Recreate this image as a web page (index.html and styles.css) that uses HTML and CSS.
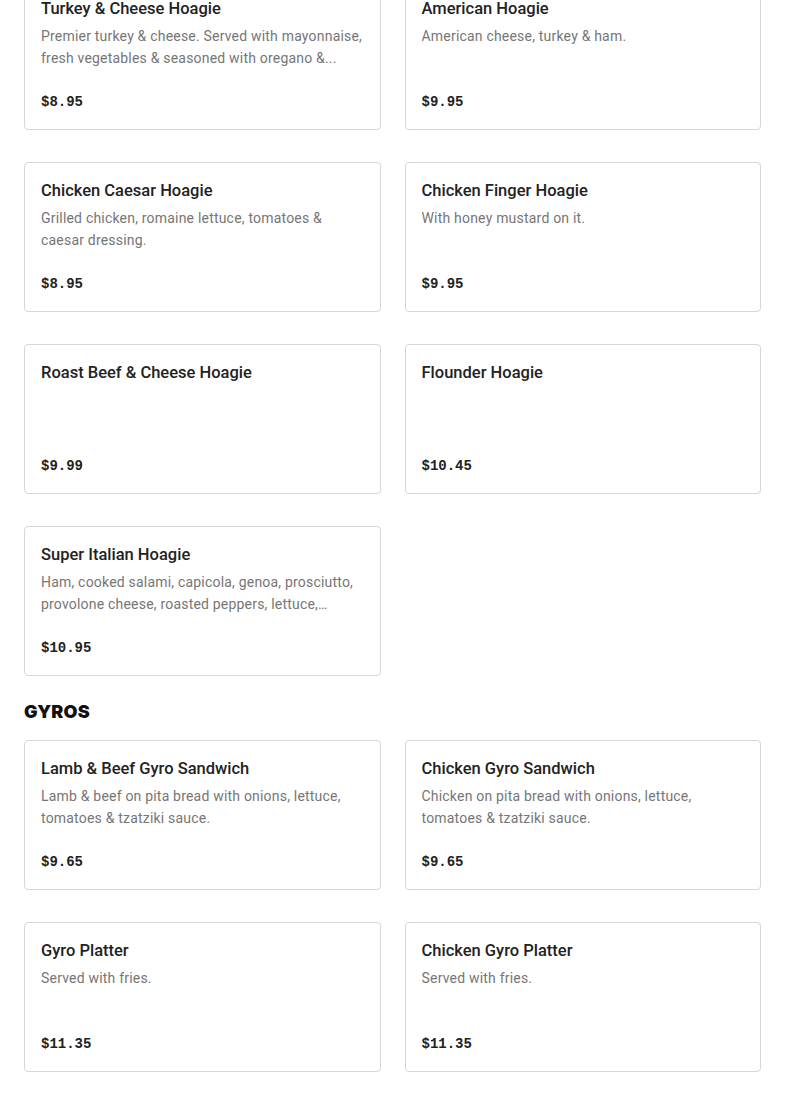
FILE: index.html
```
<!DOCTYPE html>
<html lang="en">
<head>
    <meta charset="UTF-8">
    <meta name="viewport" content="width=device-width, initial-scale=1.0">
    <link rel="stylesheet" href="styles.css">
    <title>Menu</title>
</head>
<body>

    <div class="menu">
        <section class="menu-section">
            <div class="item-grid scrolled">
                <div class="item-card">
                    <h3 class="item-name">Turkey &amp; Cheese Hoagie</h3>
                    <p class="item-desc">Premier turkey &amp; cheese. Served with mayonnaise, fresh vegetables &amp; seasoned with oregano &amp;...</p>
                    <div class="item-price">$8.95</div>
                </div>
                <div class="item-card">
                    <h3 class="item-name">American Hoagie</h3>
                    <p class="item-desc">American cheese, turkey &amp; ham.</p>
                    <div class="item-price">$9.95</div>
                </div>
                <div class="item-card">
                    <h3 class="item-name">Chicken Caesar Hoagie</h3>
                    <p class="item-desc">Grilled chicken, romaine lettuce, tomatoes &amp; caesar dressing.</p>
                    <div class="item-price">$8.95</div>
                </div>
                <div class="item-card">
                    <h3 class="item-name">Chicken Finger Hoagie</h3>
                    <p class="item-desc">With honey mustard on it.</p>
                    <div class="item-price">$9.95</div>
                </div>
                <div class="item-card">
                    <h3 class="item-name">Roast Beef &amp; Cheese Hoagie</h3>
                    <div class="item-price">$9.99</div>
                </div>
                <div class="item-card">
                    <h3 class="item-name">Flounder Hoagie</h3>
                    <div class="item-price">$10.45</div>
                </div>
                <div class="item-card">
                    <h3 class="item-name">Super Italian Hoagie</h3>
                    <p class="item-desc">Ham, cooked salami, capicola, genoa, prosciutto, provolone cheese, roasted peppers, lettuce, tomatoes, onions, oil &amp; oregano.</p>
                    <div class="item-price">$10.95</div>
                </div>
            </div>
        </section>

        <section class="menu-section">
            <h2 class="section-title">GYROS</h2>
            <div class="item-grid">
                <div class="item-card">
                    <h3 class="item-name">Lamb &amp; Beef Gyro Sandwich</h3>
                    <p class="item-desc">Lamb &amp; beef on pita bread with onions, lettuce, tomatoes &amp; tzatziki sauce.</p>
                    <div class="item-price">$9.65</div>
                </div>
                <div class="item-card">
                    <h3 class="item-name">Chicken Gyro Sandwich</h3>
                    <p class="item-desc">Chicken on pita bread with onions, lettuce, tomatoes &amp; tzatziki sauce.</p>
                    <div class="item-price">$9.65</div>
                </div>
                <div class="item-card">
                    <h3 class="item-name">Gyro Platter</h3>
                    <p class="item-desc">Served with fries.</p>
                    <div class="item-price">$11.35</div>
                </div>
                <div class="item-card">
                    <h3 class="item-name">Chicken Gyro Platter</h3>
                    <p class="item-desc">Served with fries.</p>
                    <div class="item-price">$11.35</div>
                </div>
            </div>
        </section>

        <section class="menu-section">
            <h2 class="section-title">SANDWICHES</h2>
        </section>
    </div>

</body>
</html>
```

FILE: styles.css
```
body {
    margin: 0;
    background-color: #fff;
    color: #222;
    font-family: 'Roboto', 'Liberation Sans', sans-serif;
}

.menu {
    padding: 0 24px;
}

/* la page est deja defilee : la premiere rangee est coupee en haut */
.scrolled {
    margin-top: -20px;
}

.section-title {
    margin: 24px 0 16px;
    font-family: 'Inter', sans-serif;
    font-size: 18px;
    line-height: 24px;
    font-weight: 900;
    letter-spacing: 0.2px;
    color: #111;
}

.menu-section:last-child .section-title {
    margin-top: 28px;
}

.item-grid {
    display: grid;
    grid-template-columns: 1fr 1fr;
    column-gap: 24px;
    row-gap: 32px;
}

.item-card {
    display: flex;
    flex-direction: column;
    height: 150px;
    box-sizing: border-box;
    padding: 16px;
    border: 1px solid #d6d6d6;
    border-radius: 4px;
}

.item-name {
    margin: 0;
    font-size: 16.5px;
    line-height: 24px;
    font-weight: 500;
    color: #222;
}

.item-desc {
    margin: 4px 0 0;
    font-size: 14px;
    line-height: 22px;
    letter-spacing: 0.2px;
    color: #767676;
    display: -webkit-box;
    -webkit-line-clamp: 2;
    -webkit-box-orient: vertical;
    overflow: hidden;
}

.item-price {
    margin-top: auto;
    margin-bottom: -1px;
    font-family: 'Liberation Mono', monospace;
    font-size: 14px;
    line-height: 24px;
    font-weight: bold;
    color: #222;
}
```
